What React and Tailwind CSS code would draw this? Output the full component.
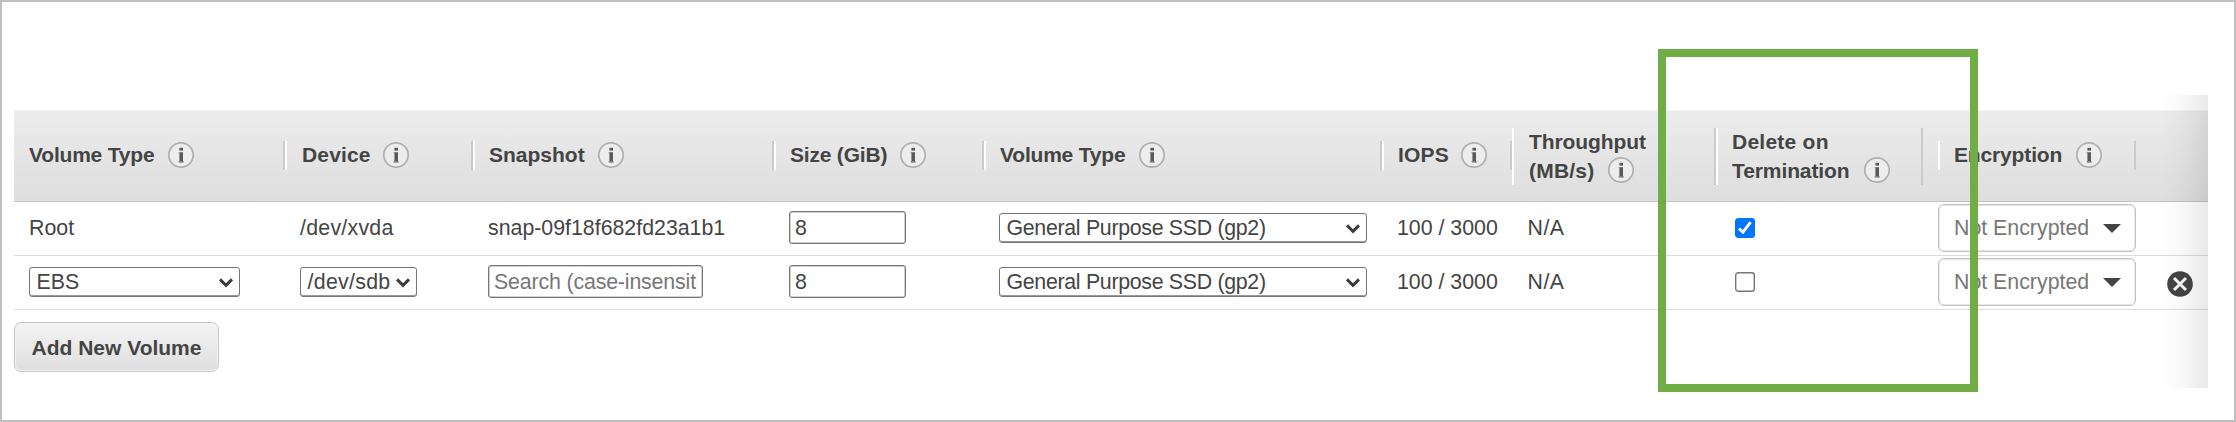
import React from "react";

const GRID =
  "grid grid-cols-[271px_188px_301px_210px_398px_130px_204px_222px_198px_72px]";

function Info({ className = "" }) {
  return (
    <svg viewBox="0 0 28 28" className={"h-7 w-7 shrink-0 " + className}>
      <circle cx="14" cy="14" r="12.2" fill="#ededed" stroke="#b0b0b0" strokeWidth="1.7" />
      <rect x="12.4" y="6.8" width="3.6" height="2.8" fill="#5a5a5a" />
      <path d="M12.4 11.2h3.6v10.2h-3.6z" fill="#5a5a5a" />
      <path d="M11.5 11.2h1v1.1h-1zM11.5 20.3h5.4v1.1h-5.4z" fill="#8a8a8a" />
    </svg>
  );
}

function Head({ left = true, right = true, width = "w-full", pad = "pl-[14px]", tall = false, children }) {
  return (
    <div className={"flex items-center" + (tall ? "" : " pb-[2px]")}>
      <div
        className={
          "flex items-center box-border " +
          width +
          " " +
          pad +
          (tall ? " h-[57px]" : " h-[29px]") +
          (left ? " border-l-2 border-l-white" : "") +
          (right ? " border-r-2 border-r-[#cbcbcb]" : "")
        }
      >
        {children}
      </div>
    </div>
  );
}

function Select({ className, textClass = "", children }) {
  return (
    <div
      className={
        "flex h-[30px] items-center justify-between rounded-[3px] border border-[#767676] bg-white pt-[2px] pl-[6.5px] pr-[6px] shadow-[inset_0_-1px_0_#9a9a9a] " +
        className
      }
    >
      <span className={textClass}>{children}</span>
      <svg viewBox="0 0 14 10" className="h-[10px] w-[14px] shrink-0">
        <path d="M1 1.4 7 7.4l6-6" fill="none" stroke="#3c3c3c" strokeWidth="3" />
      </svg>
    </div>
  );
}

function SizeInput() {
  return (
    <div className="flex h-[33px] w-[117px] items-center rounded-[3px] border border-[#767676] bg-white pt-[2px] pl-[5px] shadow-[inset_0_0_0_0.5px_#a0a0a0]">
      8
    </div>
  );
}

function Encryption() {
  return (
    <div className="flex h-[48px] w-[198px] items-center justify-between rounded-[6px] border border-[#c4c4c4] bg-white pt-[2px] pl-[15px] pr-[14px] text-[#777] shadow-[inset_0_0_0_0.5px_#d0d0d0]">
      <span className="w-[134px] overflow-hidden whitespace-nowrap">Not Encrypted</span>
      <svg viewBox="0 0 18 9" className="h-[9px] w-[18px]">
        <path d="M0 0h18L9 9z" fill="#444" />
      </svg>
    </div>
  );
}

function Checkbox({ checked }) {
  return (
    <svg viewBox="0 0 20 20" className="mt-px ml-[19px] h-5 w-5">
      <rect
        x="0.7"
        y="0.7"
        width="18.6"
        height="18.6"
        rx="2.6"
        fill={checked ? "#0075ff" : "#fff"}
        stroke={checked ? "#0075ff" : "#767676"}
        strokeWidth="1.4"
      />
      {checked && (
        <path d="M4 10.6 8 14.2 15.6 4.2" fill="none" stroke="#fff" strokeWidth="2.9" />
      )}
    </svg>
  );
}

function Row({ type, device, snapshot, removable, checked }) {
  return (
    <div className={GRID + " h-[54px] items-center border-b border-[#dcdcdc] pb-[2px]"}>
      <div className="pl-[15px]">{type}</div>
      <div className="pl-[15px]">{device}</div>
      <div className="pl-[15px]">{snapshot}</div>
      <div className="pl-[15px]">
        <SizeInput />
      </div>
      <div className="pl-[15px]">
        <Select className="w-[368px]" textClass="tracking-[-0.3px]">
          General Purpose SSD (gp2)
        </Select>
      </div>
      <div className="pt-[2px] pl-[15px]">100 / 3000</div>
      <div className="pt-[2px] pl-[15.5px] tracking-[0.5px]">N/A</div>
      <div>
        <Checkbox checked={checked} />
      </div>
      <Encryption />
      <div className="pl-[31px]">
        {removable && (
          <svg viewBox="0 0 26 26" className="mt-[5px] h-[26px] w-[26px]">
            <circle cx="13" cy="13" r="12.8" fill="#444" />
            <path d="M7 7 19 19M19 7 7 19" stroke="#f6f6f6" strokeWidth="3" />
          </svg>
        )}
      </div>
    </div>
  );
}

export default function App() {
  return (
    <div className="relative h-[422px] w-[2236px] overflow-hidden border-2 border-[#bfbfbf] bg-white pl-3 pt-[108px] font-['Liberation_Sans',Arial,sans-serif] text-[21.33px] leading-[28.5px] whitespace-nowrap text-[#444]">
      <div className="w-[2194px]">
        <div
          className={
            GRID +
            " h-[92px] border-t border-b border-t-[#f3f3f3] border-b-[#c4c4c4] bg-linear-to-b from-[#ececec] to-[#dedede] text-[21px] font-bold"
          }
        >
          <Head left={false} pad="pl-[15px]">
            <span className="pt-px tracking-[-0.2px]">Volume Type</span>
            <Info className="ml-[13px]" />
          </Head>
          <Head pad="pl-[15px]">
            <span className="pt-px tracking-[0.15px]">Device</span>
            <Info className="ml-[11.5px]" />
          </Head>
          <Head>
            <span className="pt-px">Snapshot</span>
            <Info className="ml-3" />
          </Head>
          <Head>
            <span className="pt-px tracking-[-0.2px]">Size (GiB)</span>
            <Info className="ml-3" />
          </Head>
          <Head>
            <span className="pt-px tracking-[-0.2px]">Volume Type</span>
            <Info className="ml-[13px]" />
          </Head>
          <Head>
            <span className="pt-px tracking-[0.2px]">IOPS</span>
            <Info className="ml-[11.5px]" />
          </Head>
          <Head tall pad="pl-[15px]">
            <div>
              <div className="tracking-[-0.1px]">Throughput</div>
              <div className="flex h-[28.5px] items-center">
                <span className="pt-px tracking-[0.2px]">(MB/s)</span>
                <Info className="ml-[13px]" />
              </div>
            </div>
          </Head>
          <Head tall width="w-[207px]">
            <div>
              <div className="tracking-[0.25px]">Delete on</div>
              <div className="flex h-[28.5px] items-center">
                <span className="pt-px tracking-[-0.1px]">Termination</span>
                <Info className="ml-[13px]" />
              </div>
            </div>
          </Head>
          <Head>
            <span className="pt-px tracking-[-0.15px]">Encryption</span>
            <Info className="ml-[13px]" />
          </Head>
        </div>
        <Row
          type={<div className="pt-[2px]">Root</div>}
          device={<div className="pt-[2px] tracking-[0.25px]">/dev/xvda</div>}
          snapshot={<div className="pt-[2px]">snap-09f18f682fd23a1b1</div>}
          checked
        />
        <Row
          type={<Select className="w-[211px]">EBS</Select>}
          device={
            <Select className="w-[117px]" textClass="tracking-[0.3px]">
              /dev/sdb
            </Select>
          }
          snapshot={
            <input
              type="text"
              placeholder="Search (case-insensitive)"
              className="block h-[33px] w-[215px] rounded-[3px] border border-[#767676] bg-white px-[5px] pt-[2px] tracking-[-0.15px] shadow-[inset_0_0_0_0.5px_#a0a0a0] placeholder:text-[#777]"
            />
          }
          removable
        />
        <button className="mt-[12px] flex h-[50px] w-[205px] items-center justify-center rounded-[7px] border-[1.5px] border-[#c8c8c8] bg-linear-to-b from-[#f4f4f4] to-[#dfdfdf] pt-[2px] text-[21px] font-bold shadow-[inset_0_0_0_1px_#f2f2f2]">
          Add New Volume
        </button>
      </div>
      <div className="pointer-events-none absolute top-[93px] left-[2158px] h-[293px] w-[48px] bg-linear-to-r from-black/0 via-black/3 to-black/9" />
      <div className="pointer-events-none absolute top-[47px] left-[1656px] h-[343px] w-[320px] border-8 border-[#70ad47]" />
    </div>
  );
}
